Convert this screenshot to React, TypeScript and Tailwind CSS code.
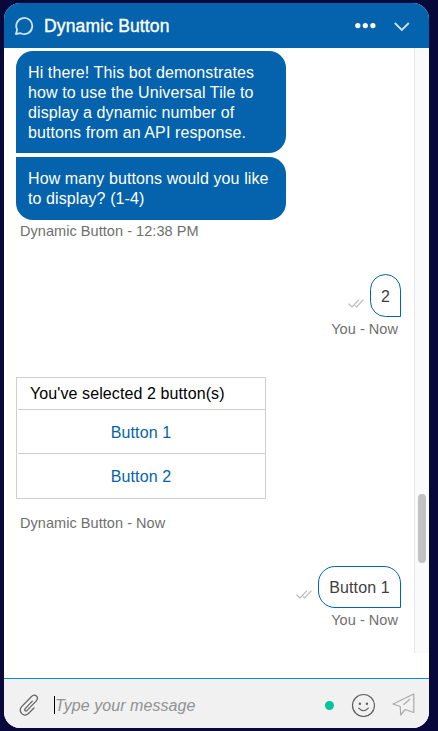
import React from "react";

const FONT = "font-['Liberation_Sans',Arial,sans-serif]";

function ReadTicks() {
  return (
    <svg width="16" height="9" viewBox="0 0 16 9" fill="none" stroke="#b9b9b9" strokeWidth="1.2" className="shrink-0">
      <path d="M0.5 4.8 L4 8 L11 0.6" />
      <path d="M6.9 6.4 L8.6 8 L15.5 0.6" />
    </svg>
  );
}

function BotBubble({ lines, shape }: { lines: string[]; shape: string }) {
  return (
    <div className={`w-[270px] bg-[#0463ac] pl-3 text-base leading-5 tracking-[0.1px] text-white ${shape}`}>
      {lines.map((line) => (
        <p key={line} className="whitespace-nowrap">{line}</p>
      ))}
    </div>
  );
}

function Reply({ text, size }: { text: string; size: string }) {
  return (
    <div className="flex flex-col items-end pr-[13px]">
      <div className="flex items-end gap-[6px]">
        <div className="pb-[9px]"><ReadTicks /></div>
        <div className={`flex items-center justify-center rounded-[17px] rounded-br-none border border-[#0463ac] pt-[2px] text-base tracking-[0.1px] text-[#3f3f3f] ${size}`}>
          {text}
        </div>
      </div>
      <p className="mt-[2px] pr-[3px] text-[14.5px] leading-5 tracking-[0.05px] text-[#6f6f6f]">You - Now</p>
    </div>
  );
}

export default function App() {
  return (
    <div className={`h-[731px] w-[438px] overflow-hidden bg-[#08083a] pl-1 pt-[3px] ${FONT}`}>
      <div className="flex h-[725px] w-[425px] flex-col overflow-hidden rounded-[16px] bg-white">
        <header className="flex h-[45px] shrink-0 items-center bg-[#0463ac] pl-[11px] pr-[19px] text-white">
          <svg width="20" height="20" viewBox="0 0 20 20" fill="none" stroke="#cfe2f2" strokeWidth="1.8">
            <path d="M0.9 18 L2.2 13.8 A8 8.1 0 1 1 5.6 17.2 Z" strokeLinejoin="round" />
          </svg>
          <h1 className="ml-[9px] grow text-[17.5px] leading-5 tracking-[0.15px] [-webkit-text-stroke:0.35px_white]">Dynamic Button</h1>
          <svg width="22" height="6" viewBox="0 0 22 6" fill="white">
            <circle cx="2.8" cy="2.6" r="2.6" />
            <circle cx="10.3" cy="2.6" r="2.6" />
            <circle cx="17.9" cy="2.6" r="2.6" />
          </svg>
          <svg width="16" height="10" viewBox="0 0 16 10" className="ml-[17px] mt-[2px]" fill="none" stroke="#cfe2f2" strokeWidth="1.8">
            <path d="M0.8 1 L7.8 8 L14.8 1" />
          </svg>
        </header>

        <div className="flex h-[605px] shrink-0">
          <main className="flex w-[410px] flex-col pl-3 pt-[3px]">
            <BotBubble
              lines={["Hi there! This bot demonstrates", "how to use the Universal Tile to", "display a dynamic number of", "buttons from an API response."]}
              shape="h-[102px] rounded-[17px] rounded-bl-none pt-[12px]"
            />
            <BotBubble
              lines={["How many buttons would you like", "to display? (1-4)"]}
              shape="mt-1 h-[63px] rounded-[17px] rounded-tl-none pt-[12px]"
            />
            <p className="mt-[1px] pl-1 text-[14.5px] leading-5 tracking-[0.05px] text-[#6f6f6f]">Dynamic Button - 12:38 PM</p>

            <div className="mt-[33px]">
              <Reply text="2" size="h-[43px] w-[31px]" />
            </div>

            <section className="mt-[38px] h-[122px] w-[250px] border border-[#cfcfcf] pl-px text-base tracking-[0.1px]">
              <p className="h-[31px] pl-[12px] leading-8 text-black">You've selected 2 button(s)</p>
              <button className="block h-[44px] w-full border-t border-[#cfcfcf] pr-px pt-[2px] text-[#0463ac]">Button 1</button>
              <button className="block h-[45px] w-full border-t border-[#cfcfcf] pr-px pt-[1px] text-[#0463ac]">Button 2</button>
            </section>
            <p className="mt-[14px] pl-1 text-[14.5px] leading-5 tracking-[0.05px] text-[#6f6f6f]">Dynamic Button - Now</p>

            <div className="mt-[33px]">
              <Reply text="Button 1" size="h-[42px] w-[83px]" />
            </div>
          </main>
          <div className="w-[15px] border-l border-[#e7e7e7] bg-[#fafafa] pl-[3px] pt-[446px]">
            <div className="h-[69px] w-2 rounded-full bg-[#c1c1c1]" />
          </div>
        </div>

        <footer className="mt-[25px] flex h-[50px] shrink-0 items-center border-t border-[#0a84e8] bg-[#f1f1f1] pb-[1px] pl-[15px] pr-[14px]">
          <svg width="20" height="23" viewBox="0 0 20 23" fill="none" stroke="#666666" strokeWidth="1.3" strokeLinecap="round" className="mt-[5px]">
            <path d="M13.3 7.1 L6.2 14.6 C4.8 16.2 6.6 17.8 8.1 16.4 L17.1 7.1 C20.6 3.1 16 -1 12.3 2.7 L2.7 12.6 C-1.2 17 4.2 24 9.2 19.8 L15 14" />
          </svg>
          <div className="ml-[15px] mt-[4px] h-[18px] w-px bg-black" />
          <p className="mt-[5px] grow text-base italic leading-5 tracking-[0.07px] text-[#919191]">Type your message</p>
          <div className="mt-[4px] size-[9px] rounded-full bg-[#05c49b]" />
          <svg width="24" height="24" viewBox="0 0 24 24" fill="none" stroke="#606060" strokeWidth="1.2" className="ml-[17px] mt-[4px]" strokeLinecap="round">
            <circle cx="12.5" cy="12.5" r="11" />
            <path d="M7.7 15.2 Q12.5 20.3 17.3 15.2" />
            <circle cx="8.9" cy="10.7" r="0.6" fill="#606060" />
            <circle cx="15.9" cy="10.7" r="0.6" fill="#606060" />
          </svg>
          <svg width="23" height="23" viewBox="0 0 23 23" fill="none" stroke="#aaaaaa" strokeWidth="1.2" strokeLinejoin="round" className="ml-[17px] mt-[3px]">
            <path d="M21.8 1 L1 11 L8.3 13.5 L8.6 22 L13.2 16.5 L21.8 19.5 Z M18 6 L11.5 11.8" />
          </svg>
        </footer>
      </div>
    </div>
  );
}
